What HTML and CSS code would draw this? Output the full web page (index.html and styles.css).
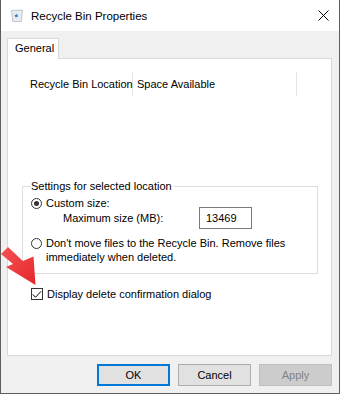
FILE: index.html
```html
<!DOCTYPE html>
<html lang="en">
<head>
    <meta charset="UTF-8">
    <title>Recycle Bin Properties</title>
    <link rel="stylesheet" href="styles.css">
</head>
<body>
    <div class="window">
        <div class="title-bar">
            <svg class="title-icon" width="12" height="13" viewBox="0 0 12 13">
                <path d="M0.5 1.5 L11.5 1 L10.3 12.5 L1.7 12.5 Z" fill="#e8ebef" stroke="#b4bcc6" stroke-width="0.8"/>
                <path d="M3.5 6.5 L5.8 5 L7.2 7.2 L4.8 8.6 Z" fill="#2f7fd0"/>
            </svg>
            <span class="title-text">Recycle Bin Properties</span>
            <svg class="close-icon" width="11" height="11" viewBox="0 0 11 11">
                <path d="M0.5 0.5 L10.5 10.5 M10.5 0.5 L0.5 10.5" stroke="#000" stroke-width="1"/>
            </svg>
        </div>

        <div class="dialog-body">
            <div class="tabs">
                <div class="tab">General</div>
            </div>
            <div class="tab-panel">
                <div class="list-header">
                    <div class="col col-location">Recycle Bin Location</div>
                    <div class="col col-space">Space Available</div>
                </div>
                <div class="list-body"></div>

                <div class="group">
                    <span class="group-label">Settings for selected location</span>
                    <div class="option first">
                        <span class="radio checked"></span>
                        <span>Custom size:</span>
                    </div>
                    <div class="size-row">
                        <span class="size-label">Maximum size (MB):</span>
                        <span class="text-box">13469</span>
                    </div>
                    <div class="option second">
                        <span class="radio"></span>
                        <span>Don't move files to the Recycle Bin. Remove files<br>immediately when deleted.</span>
                    </div>
                </div>

                <div class="option confirm">
                    <span class="checkbox">
                        <svg width="11" height="9" viewBox="0 0 11 9">
                            <path d="M0.8 4.3 L3.8 7.6 L10 1" fill="none" stroke="#000" stroke-width="1.1"/>
                        </svg>
                    </span>
                    <span>Display delete confirmation dialog</span>
                </div>
            </div>

            <div class="buttons">
                <button class="btn default">OK</button>
                <button class="btn">Cancel</button>
                <button class="btn" disabled>Apply</button>
            </div>
        </div>

        <!-- red pointer drawn over the dialog -->
        <svg class="pointer-arrow" width="40" height="50" viewBox="0 240 40 50">
            <defs>
                <linearGradient id="arrowFill" x1="0" y1="0" x2="1" y2="1">
                    <stop offset="0" stop-color="#f55252"/>
                    <stop offset="1" stop-color="#e4272b"/>
                </linearGradient>
            </defs>
            <path d="M1 254 L8 247 L22.8 260.9 L33.5 256.5 L35.5 285 L6 267 L13 264 Z" fill="url(#arrowFill)"/>
        </svg>
    </div>
</body>
</html>
```

FILE: styles.css
```css
body {
    margin: 0;
    padding: 0;
    font-family: "Liberation Sans", Arial, sans-serif;
    font-size: 11px;
    color: #000;
}

.window {
    position: relative;
    width: 340px;
    height: 394px;
    box-sizing: border-box;
    border: 1px solid #5e5e5e;
    border-top: none;
    background: #f0f0f0;
    display: flex;
    flex-direction: column;
}

.title-bar {
    height: 31px;
    background: #fff;
    display: flex;
    align-items: center;
    padding: 0 10px;
    flex-shrink: 0;
}

.title-icon {
    margin-right: 8px;
}

.title-text {
    flex: 1;
    font-size: 11.5px;
}

.dialog-body {
    flex: 1;
    display: flex;
    flex-direction: column;
    padding: 7px 7px 0 6px;
}

.tabs {
    display: flex;
    height: 20px;
}

.tab {
    width: 52px;
    height: 21px;
    box-sizing: border-box;
    padding: 3px 0 0 7px;
    background: #fff;
    border: 1px solid #d9d9d9;
    border-bottom: none;
    position: relative;
    z-index: 1;
}

.tab-panel {
    background: #fff;
    border: 1px solid #d9d9d9;
    height: 298px;
    box-sizing: border-box;
    padding-top: 13px;
    display: flex;
    flex-direction: column;
}

.list-header {
    display: flex;
    height: 24px;
    margin-left: 7px;
    width: 282px;
    white-space: nowrap;
}

.col {
    line-height: 24px;
    border-right: 1px solid #e5e5e5;
}

.col-location {
    width: 118px;
    padding-left: 15px;
    box-sizing: border-box;
}

.col-space {
    flex: 1;
    padding-left: 4px;
}

.list-body {
    height: 90px;
}

.group {
    margin-left: 14px;
    width: 296px;
    height: 88px;
    box-sizing: border-box;
    border: 1px solid #dcdcdc;
    padding: 0 0 0 8px;
    display: flex;
    flex-direction: column;
    align-items: flex-start;
}

.group-label {
    background: #fff;
    line-height: 14px;
    margin-top: -8px;
    padding: 0 2px 0 0;
}

.option {
    display: flex;
    align-items: flex-start;
    gap: 4px;
    line-height: 14px;
}

.option.first {
    margin-top: 3px;
}

.option.second {
    margin-top: 7px;
}

.radio {
    width: 11px;
    height: 11px;
    box-sizing: border-box;
    border: 1px solid #333;
    border-radius: 50%;
    margin-top: 2px;
    flex-shrink: 0;
    display: flex;
    align-items: center;
    justify-content: center;
}

.radio.checked::after {
    content: "";
    width: 5px;
    height: 5px;
    border-radius: 50%;
    background: #333;
}

.size-row {
    display: flex;
    align-items: center;
    margin-top: -3px;
    padding-left: 32px;
    height: 22px;
}

.size-label {
    width: 136px;
}

.text-box {
    width: 53px;
    height: 22px;
    box-sizing: border-box;
    line-height: 20px;
    border: 1px solid #7a7a7a;
    padding-left: 6px;
}

.confirm {
    margin: 13px 0 0 23px;
}

.checkbox {
    width: 12px;
    height: 12px;
    box-sizing: border-box;
    margin-top: 1px;
    border: 1px solid #333;
    display: flex;
    align-items: center;
    justify-content: center;
}

.buttons {
    display: flex;
    justify-content: flex-end;
    gap: 8px;
    margin-top: 8px;
}

.btn {
    width: 73px;
    height: 22px;
    font-family: inherit;
    font-size: 11px;
    background: #e1e1e1;
    border: 1px solid #adadad;
    padding: 0;
    color: #000;
}

.btn.default {
    border: 2px solid #0078d7;
}

.btn:disabled {
    color: #838383;
    background: #cccccc;
    border-color: #bfbfbf;
}

.pointer-arrow {
    position: absolute;
    left: -1px;
    top: 240px;
}
```
